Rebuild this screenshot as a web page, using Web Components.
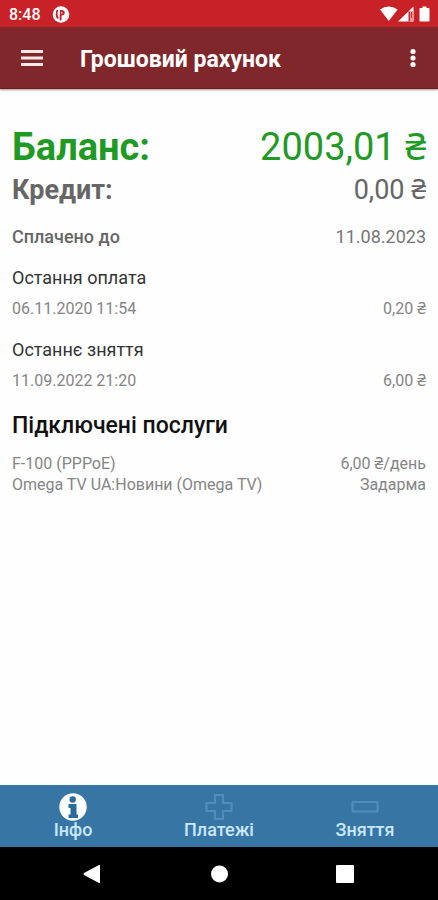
<!DOCTYPE html>
<html lang="uk">
<head>
<meta charset="utf-8">
<meta name="viewport" content="width=device-width, initial-scale=1">
<title>Грошовий рахунок</title>
<style>
body {
  margin: 0;
  background: #fefefe;
  font-family: Roboto, 'Noto Sans', sans-serif;
}
</style>
</head>
<body>
<account-app></account-app>

<template id="status-bar">
<style>
:host {
  display: flex;
  align-items: center;
  justify-content: space-between;
  height: 27px;
  padding: 0 8px 0 9px;
  background: #c82127;
  color: #fff;
  font-size: 16px;
  font-weight: 500;
  line-height: 20px;
}
div {
  display: flex;
  align-items: center;
  gap: 11px;
  padding-top: 2px;
}
svg {
  display: block;
}
</style>
<div>
  <span>8:48</span>
  <svg width="18" height="18" viewBox="0 0 18 18" aria-hidden="true">
    <circle cx="9" cy="8.500" r="8.300" fill="#fff"/>
    <path d="M5.500 4q-2 4.500 .5 8.500M8.600 14.500V8" fill="none" stroke="#c82127" stroke-width="1.800"/>
    <path d="M8 4h2.500q2.300 .5 2.300 2.700 0 2.300-2.300 2.800H8z" fill="#c82127"/>
    <path d="M9.800 5.800v2" stroke="#fff" stroke-width="1"/>
  </svg>
</div>
<svg width="50" height="16" viewBox="0 0 50 16" aria-hidden="true">
  <path d="M0 3.600Q8.800-2.400 17.600 3.600L8.800 15z" fill="#fff"/>
  <path d="M33.500 .5v15H18z" fill="#fff"/>
  <path d="M28.500 5.500h1.500v10h-1.500z" fill="#c82127"/>
  <path d="M30 5h3.500v10.500H30z" fill="#ee9b9e"/>
  <path d="M31.500 6v6" stroke="#c82127" stroke-width="1"/>
  <path d="M42.500 .5h4v1.500h2.200q.8 0 .8.800v12q0 .8-.8.800h-8.400q-.8 0-.8-.8v-12q0-.8.8-.8h2.200z" fill="#fff"/>
</svg>
</template>

<template id="tool-bar">
<style>
:host {
  display: flex;
  align-items: center;
  box-sizing: border-box;
  height: 62px;
  padding: 0 13px 0 20px;
  background: #7f272a;
  border-bottom: 1px solid #7a1519;
  box-shadow: 0 1px 2px rgba(0, 0, 0, 0.4);
  color: #fff;
}
h1 {
  flex: 1;
  margin: 0 0 0 36px;
  font-size: 23px;
  font-weight: 700;
  line-height: 28px;
  padding-top: 5px;
}
button {
  padding: 0;
  border: 0;
  background: none;
  color: inherit;
}
svg {
  display: block;
}
</style>
<button type="button" aria-label="Меню">
  <svg width="24" height="24" viewBox="0 0 24 24"><path d="M1 5.500h22M1 12h22M1 18.500h22" stroke="#fde9e6" stroke-width="2.800"/></svg>
</button>
<h1><slot></slot></h1>
<button type="button" aria-label="Більше">
  <svg width="24" height="24" viewBox="0 0 24 24" fill="#fff"><circle cx="12" cy="5.500" r="2.600"/><circle cx="12" cy="12" r="2.600"/><circle cx="12" cy="18.500" r="2.600"/></svg>
</button>
</template>

<template id="info-row">
<style>
:host {
  display: flex;
  justify-content: space-between;
  gap: 12px;
  color: #858585;
  font-size: 16px;
  line-height: 21px;
}
:host([kind='balance']) {
  color: #1f9a25;
  font-size: 38px;
  line-height: 46px;
}
:host([kind='credit']) {
  color: #666;
  font-size: 27px;
  line-height: 40px;
}
:host([kind='paid']) {
  margin: 15px 0 18px;
  color: #777;
  font-size: 18px;
  line-height: 24px;
}
:host([kind]) .label {
  font-weight: 700;
}
:host([kind='paid']) .label {
  font-weight: 500;
  color: #666;
}
.value {
  white-space: nowrap;
}
</style>
<span class="label"><slot></slot></span>
<span class="value"><slot name="value"></slot></span>
</template>

<template id="info-section">
<style>
:host {
  display: block;
  padding-bottom: 20px;
}
h2 {
  margin: 0 0 10px;
  color: #333;
  font-size: 18px;
  font-weight: 400;
  line-height: 21px;
}
:host([large]) h2 {
  margin-bottom: 12px;
  color: #111;
  font-size: 23px;
  font-weight: 500;
  line-height: 30px;
}
</style>
<h2><slot name="heading"></slot></h2>
<slot></slot>
</template>

<template id="tab-item">
<style>
:host {
  display: flex;
  flex: 1;
}
button {
  flex: 1;
  display: flex;
  flex-direction: column;
  align-items: center;
  padding: 8px 0;
  border: 0;
  background: none;
  color: #c9e6fa;
  font: 500 18px/18px Roboto, 'Noto Sans', sans-serif;
}
::slotted(svg) {
  display: block;
}
</style>
<button type="button"><slot name="icon"></slot><span><slot></slot></span></button>
</template>

<template id="tab-bar">
<style>
:host {
  display: flex;
  background: #3776a4;
}
</style>
<slot></slot>
</template>

<template id="system-nav">
<style>
:host {
  display: flex;
  justify-content: center;
  align-items: center;
  gap: 98px;
  height: 53px;
  background: #000;
}
button {
  padding: 0;
  border: 0;
  background: none;
}
svg {
  display: block;
  fill: #fff;
}
</style>
<button type="button" aria-label="Назад"><svg width="28" height="28" viewBox="0 0 28 28"><path d="M21 5.500v17q0 1-1 .5L5 15q-1.300-1 0-2L20 5q1-.5 1 .5z"/></svg></button>
<button type="button" aria-label="Додому"><svg width="28" height="28" viewBox="0 0 28 28"><circle cx="14.500" cy="14" r="8.500"/></svg></button>
<button type="button" aria-label="Огляд"><svg width="28" height="28" viewBox="0 0 28 28"><rect x="5" y="5" width="18" height="18" rx="1"/></svg></button>
</template>

<template id="account-app">
<style>
:host {
  display: flex;
  flex-direction: column;
  min-height: 100vh;
}
main {
  flex: 1;
  padding: 35px 12px 20px;
}
</style>
<status-bar></status-bar>
<tool-bar>Грошовий рахунок</tool-bar>
<main>
  <info-row kind="balance">Баланс:<span slot="value">2003,01 ₴</span></info-row>
  <info-row kind="credit">Кредит:<span slot="value">0,00 ₴</span></info-row>
  <info-row kind="paid">Сплачено до<span slot="value">11.08.2023</span></info-row>
  <info-section>
    <span slot="heading">Остання оплата</span>
    <info-row>06.11.2020 11:54<span slot="value">0,20 ₴</span></info-row>
  </info-section>
  <info-section>
    <span slot="heading">Останнє зняття</span>
    <info-row>11.09.2022 21:20<span slot="value">6,00 ₴</span></info-row>
  </info-section>
  <info-section large>
    <span slot="heading">Підключені послуги</span>
    <info-row>F-100 (PPPoE)<span slot="value">6,00 ₴/день</span></info-row>
    <info-row>Omega TV UA:Новини (Omega TV)<span slot="value">Задарма</span></info-row>
  </info-section>
</main>
<tab-bar>
  <tab-item>
    <svg slot="icon" width="28" height="28" viewBox="0 0 28 28">
      <circle cx="14" cy="14" r="13.700" fill="#fff"/>
      <circle cx="13.700" cy="6.500" r="3.200" fill="#2b6b9b"/>
      <path d="M9.500 11h8v10.500H19V25H9.500v-3.500h2V15h-2z" fill="#2b6b9b"/>
    </svg>
    Інфо
  </tab-item>
  <tab-item>
    <svg slot="icon" width="28" height="28" viewBox="0 0 28 28">
      <path d="M10 2h8v8h8.500v8H18v8h-8v-8H1.500v-8H10z" fill="none" stroke="#4f8ebc" stroke-width="2.200" stroke-linejoin="round"/>
    </svg>
    Платежі
  </tab-item>
  <tab-item>
    <svg slot="icon" width="28" height="28" viewBox="0 0 28 28">
      <rect x="1.500" y="9" width="25" height="9.500" rx=".5" fill="none" stroke="#4f8ebc" stroke-width="2.200"/>
    </svg>
    Зняття
  </tab-item>
</tab-bar>
<system-nav></system-nav>
</template>

<script>
const elements = ['status-bar', 'tool-bar', 'info-row', 'info-section', 'tab-item', 'tab-bar', 'system-nav', 'account-app'];

elements.forEach((name) => {
  const tmpl = document.getElementById(name);

  customElements.define(name, class extends HTMLElement {
    constructor() {
      super();

      const shadowRoot = this.attachShadow({ mode: 'open' });
      shadowRoot.appendChild(tmpl.content.cloneNode(true));
    }
  });
});
</script>
</body>
</html>
